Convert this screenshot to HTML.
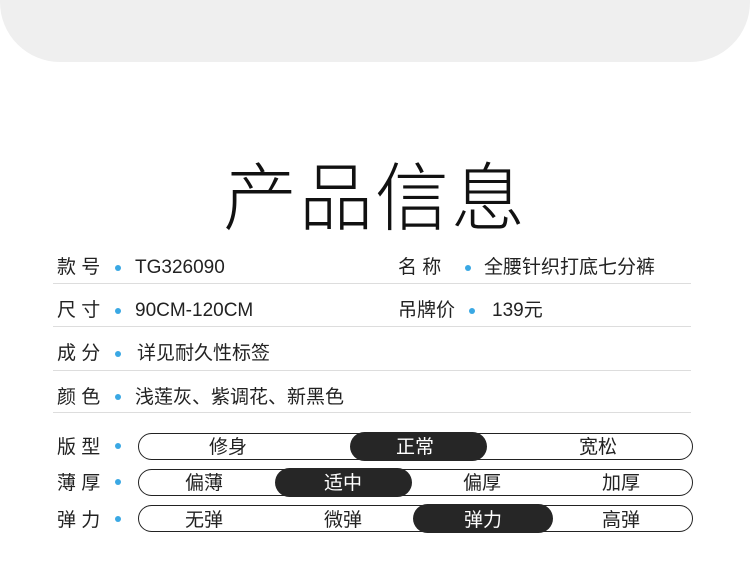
<!DOCTYPE html>
<html><head><meta charset="utf-8"><style>
body{margin:0;width:750px;height:580px;background:#fff;position:relative;overflow:hidden;font-family:"Liberation Sans","Noto Sans CJK SC",sans-serif;color:#222}
.top{position:absolute;left:0;top:-10px;width:750px;height:72px;background:#efefef;border-radius:0 0 60px 60px}
.t{position:absolute;white-space:nowrap;font-size:19px;line-height:20px}
.title{position:absolute;left:0;width:750px;top:154px;text-align:center;font-size:74px;line-height:90px;font-weight:300;letter-spacing:2px;color:#111}
.ln{position:absolute;left:53px;width:638px;height:1px;background:#ddd}
.dot{position:absolute;width:6px;height:6px;border-radius:3px;background:#3aa8e4}
.pill{position:absolute;left:138px;width:553px;height:25px;border:1.3px solid #222;border-radius:14px}
.dk{position:absolute;height:29px;background:#262626;border-radius:15px}
.c{position:absolute;font-size:19px;line-height:20px;transform:translateX(-50%);white-space:nowrap}
</style></head><body>
<div class="top"></div>
<div class="title">产品信息</div>

<div class="t" style="left:57px;top:258px">款 号</div><div class="dot" style="left:115px;top:265px"></div><div class="t" style="left:135px;top:258px">TG326090</div>
<div class="t" style="left:398px;top:258px">名 称</div><div class="dot" style="left:465px;top:265px"></div><div class="t" style="left:484px;top:258px">全腰针织打底七分裤</div>
<div class="ln" style="top:283px"></div>
<div class="t" style="left:57px;top:301px">尺 寸</div><div class="dot" style="left:115px;top:308px"></div><div class="t" style="left:135px;top:301px">90CM-120CM</div>
<div class="t" style="left:398px;top:301px">吊牌价</div><div class="dot" style="left:469px;top:308px"></div><div class="t" style="left:492px;top:301px">139元</div>
<div class="ln" style="top:326px"></div>
<div class="t" style="left:57px;top:344px">成 分</div><div class="dot" style="left:115px;top:351px"></div><div class="t" style="left:137px;top:344px">详见耐久性标签</div>
<div class="ln" style="top:370px"></div>
<div class="t" style="left:57px;top:388px">颜 色</div><div class="dot" style="left:115px;top:394px"></div><div class="t" style="left:135px;top:388px">浅莲灰、紫调花、新黑色</div>
<div class="ln" style="top:412px"></div>

<div class="t" style="left:57px;top:438px">版 型</div><div class="dot" style="left:115px;top:443px"></div>
<div class="pill" style="top:433px"></div><div class="dk" style="left:350px;width:137px;top:432px"></div>
<div class="c" style="left:228px;top:438px">修身</div><div class="c" style="left:415px;top:438px;color:#fff">正常</div><div class="c" style="left:598px;top:438px">宽松</div>

<div class="t" style="left:57px;top:474px">薄 厚</div><div class="dot" style="left:115px;top:479px"></div>
<div class="pill" style="top:469px"></div><div class="dk" style="left:275px;width:137px;top:468px"></div>
<div class="c" style="left:204px;top:474px">偏薄</div><div class="c" style="left:343px;top:474px;color:#fff">适中</div><div class="c" style="left:482px;top:474px">偏厚</div><div class="c" style="left:621px;top:474px">加厚</div>

<div class="t" style="left:57px;top:511px">弹 力</div><div class="dot" style="left:115px;top:516px"></div>
<div class="pill" style="top:505px"></div><div class="dk" style="left:413px;width:140px;top:504px"></div>
<div class="c" style="left:204px;top:511px">无弹</div><div class="c" style="left:343px;top:511px">微弹</div><div class="c" style="left:483px;top:511px;color:#fff">弹力</div><div class="c" style="left:621px;top:511px">高弹</div>
</body></html>
